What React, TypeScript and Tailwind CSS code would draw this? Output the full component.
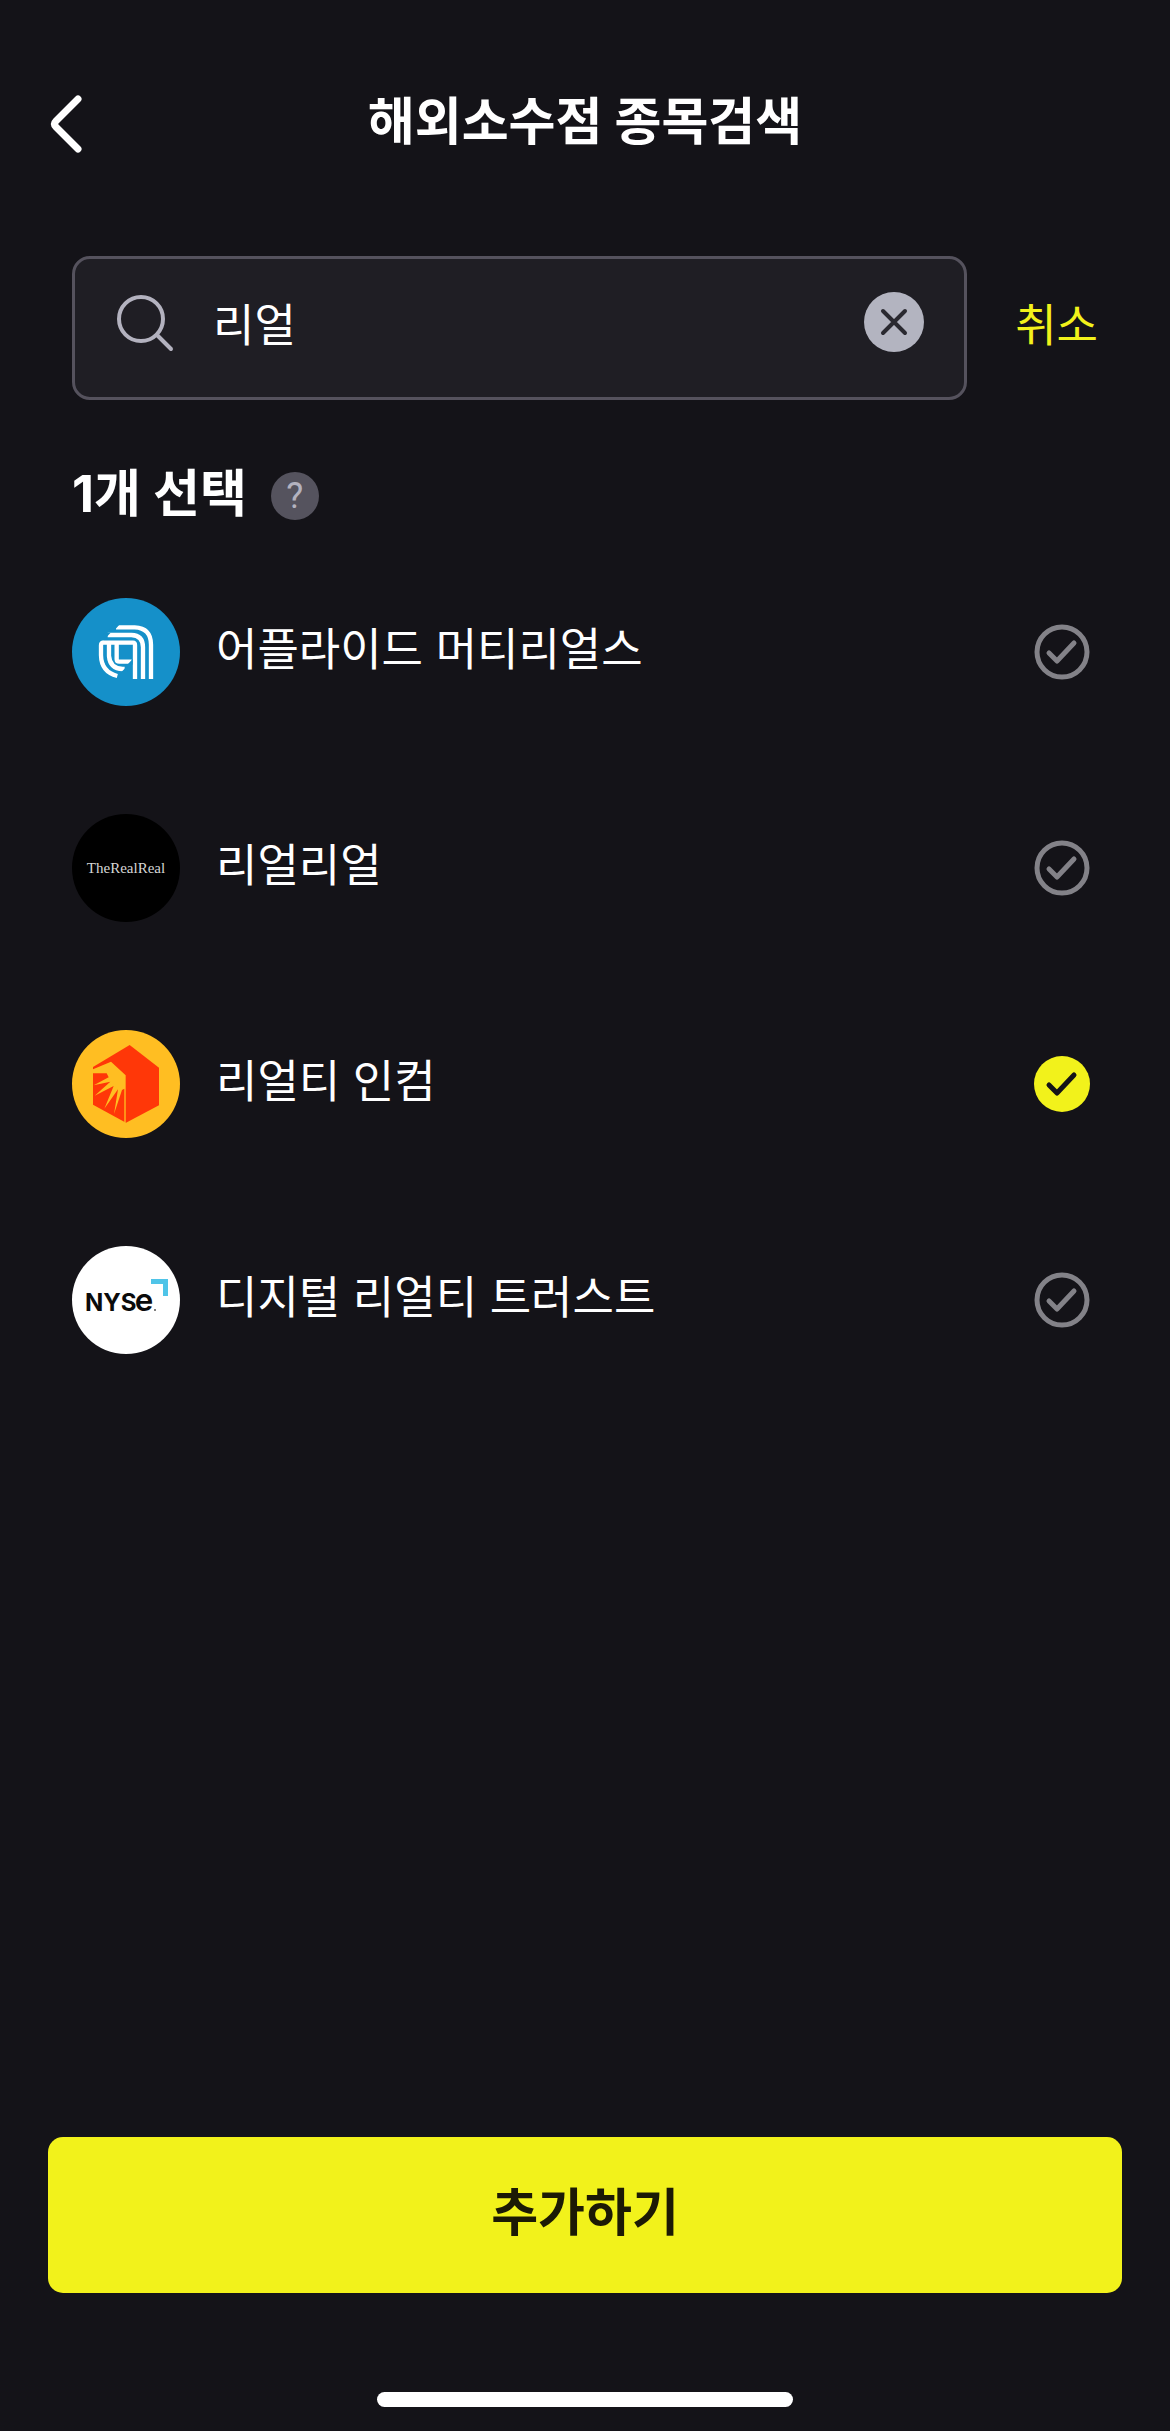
import { useState } from "react";

function AppliedLogo() {
  return (
    <svg viewBox="0 0 324 324" className="size-full" aria-hidden="true">
      <rect width="324" height="324" fill="#1590c9" />
      <g fill="none" stroke="#fff" strokeWidth="13">
        <path d="M132 88H188Q237 90 237 140V243" />
        <path d="M107 111H178Q213 112 213 148V243" />
        <path d="M92 134H183Q189 134 189 141V243" />
        <path d="M94 134Q87 134 87 142V172Q88 222 136 234" />
        <path d="M111 134V174Q114 212 152 213H158" />
        <path d="M134 134V184Q134 191 142 191H179" />
      </g>
      <path
        d="M122 80H142L128 96H110ZM98 104H116L102 119H84ZM132 242L150 226V246H134ZM148 222L166 204V222ZM168 198L182 183V200Z"
        fill="#1590c9"
      />
    </svg>
  );
}

function RealRealLogo() {
  return (
    <span className="flex size-full items-center justify-center bg-black font-['Liberation_Serif'] text-[15px] leading-none whitespace-nowrap text-[#d6d6d6]">
      TheRealReal
    </span>
  );
}

function RealtyLogo() {
  return (
    <svg viewBox="0 0 324 324" className="size-full" aria-hidden="true">
      <rect width="324" height="324" fill="#ffbe22" />
      <path d="M173 45L261 113V226L162 278L63 224V111Z" fill="#ff3708" />
      <path
        d="M63 118L117 95L161 136V278H157V176L150 180L126 252L138 178L97 236L125 168L68 197L115 155L65 166L110 142L104 130H63Z"
        fill="#ffbe22"
      />
    </svg>
  );
}

function NyseLogo() {
  return (
    <svg viewBox="0 0 324 324" className="size-full" aria-hidden="true">
      <rect width="324" height="324" fill="#fff" />
      <text x="39" y="196" fontFamily="Inter, sans-serif" fontWeight="700" fontSize="72" fill="#0b0b0b">
        NYS
      </text>
      <text x="188" y="196" fontFamily="Inter, sans-serif" fontWeight="600" fontSize="94" fill="#0b0b0b">
        e
      </text>
      <circle cx="249" cy="192" r="3" fill="#555" />
      <path d="M237 99H288V150H273V114H237Z" fill="#4fc4e8" />
    </svg>
  );
}

const stocks = [
  { id: "amat", name: "어플라이드 머티리얼스", Logo: AppliedLogo },
  { id: "real", name: "리얼리얼", Logo: RealRealLogo },
  { id: "o", name: "리얼티 인컴", Logo: RealtyLogo },
  { id: "dlr", name: "디지털 리얼티 트러스트", Logo: NyseLogo },
];

function CheckMark({ on }: { on: boolean }) {
  return (
    <svg viewBox="0 0 56 56" className="size-14" fill="none" aria-hidden="true">
      {on ? (
        <circle cx="28" cy="28" r="28" fill="#f2f21b" />
      ) : (
        <circle cx="28" cy="28" r="25" stroke="#838288" strokeWidth="5" />
      )}
      <path
        d="M15 29L23 37L40 19"
        stroke={on ? "#141318" : "#838288"}
        strokeWidth="5"
        strokeLinecap="round"
        strokeLinejoin="round"
      />
    </svg>
  );
}

export default function App() {
  const [query, setQuery] = useState("리얼");
  const [selected, setSelected] = useState<string[]>(["o"]);
  const toggle = (id: string) =>
    setSelected((s) => (s.includes(id) ? s.filter((x) => x !== id) : [...s, id]));

  return (
    <div className="flex min-h-screen flex-col bg-[#141318] font-['Inter','Noto_Sans_CJK_KR',sans-serif] text-white">
      <header className="grid grid-cols-[1fr_auto_1fr] items-center px-12 pt-20">
        <button type="button" aria-label="뒤로" className="flex h-20 items-center pt-2">
          <svg viewBox="0 0 36 60" className="h-15 w-9" fill="none" aria-hidden="true">
            <path
              d="M30 5L8 27Q5 30 8 33L30 55"
              stroke="#fff"
              strokeWidth="7"
              strokeLinecap="round"
              strokeLinejoin="round"
            />
          </svg>
        </button>
        <h1 className="pt-1 text-[51px] leading-19 font-bold">해외소수점 종목검색</h1>
      </header>

      <main className="flex grow flex-col px-18 pt-24">
        <form className="flex items-center gap-12" onSubmit={(e) => e.preventDefault()}>
          <div className="flex h-36 min-w-0 grow items-center rounded-[18px] border-3 border-[#55525d] bg-[#1f1e24] pr-10 pb-3 pl-10">
            <svg viewBox="0 0 60 60" className="size-15 shrink-0" fill="none" aria-hidden="true">
              <g stroke="#b3b2bf" strokeWidth="4" strokeLinecap="round">
                <circle cx="26" cy="27" r="22" />
                <path d="M42 43L56 57" />
              </g>
            </svg>
            <input
              type="text"
              aria-label="종목 검색"
              value={query}
              onChange={(e) => setQuery(e.target.value)}
              className="ml-[38px] min-w-0 grow bg-transparent pt-2 text-[45px] leading-16 outline-none"
            />
            <button type="button" aria-label="지우기" onClick={() => setQuery("")} className="shrink-0">
              <svg viewBox="0 0 60 60" className="size-15" fill="none" aria-hidden="true">
                <circle cx="30" cy="30" r="30" fill="#b3b4c0" />
                <path d="M19 19L41 41M41 19L19 41" stroke="#2a2930" strokeWidth="4" strokeLinecap="round" />
              </svg>
            </button>
          </div>
          <button type="button" className="shrink-0 pb-1 text-[45px] leading-16 text-[#f2f21b]">
            취소
          </button>
        </form>

        <div className="flex items-center gap-6 pt-[54px]">
          <h2 className="pb-1 text-[51px] leading-20 font-bold">{selected.length}개 선택</h2>
          <button
            type="button"
            aria-label="도움말"
            className="size-12 rounded-full bg-[#55535e] text-center font-['Roboto'] text-[36px] leading-12 text-[#b3b2bf]"
          >
            ?
          </button>
        </div>

        <ul className="flex flex-col gap-27 pt-15">
          {stocks.map(({ id, name, Logo }) => (
            <li key={id}>
              <label className="flex cursor-pointer items-center gap-9 pr-2">
                <span className="size-27 shrink-0 overflow-hidden rounded-full">
                  <Logo />
                </span>
                <span className="grow pb-1 text-[45px] leading-16">{name}</span>
                <input
                  type="checkbox"
                  className="sr-only"
                  checked={selected.includes(id)}
                  onChange={() => toggle(id)}
                />
                <CheckMark on={selected.includes(id)} />
              </label>
            </li>
          ))}
        </ul>
      </main>

      <footer className="flex flex-col items-center px-12 pb-6">
        <button
          type="button"
          className="h-39 w-full rounded-[15px] bg-[#f2f21b] pb-1 text-[51px] leading-20 font-bold text-[#1c1a05]"
        >
          추가하기
        </button>
        <div className="mt-[99px] h-[15px] w-104 rounded-full bg-white" />
      </footer>
    </div>
  );
}
